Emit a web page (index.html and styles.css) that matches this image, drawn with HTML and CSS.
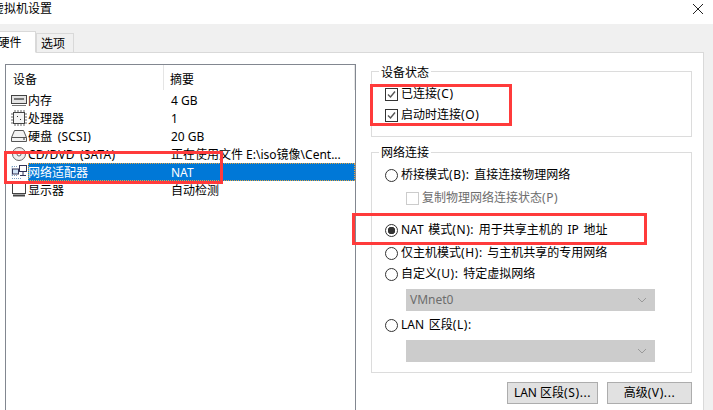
FILE: index.html
```html
<!DOCTYPE html>
<html lang="zh-CN">
<head>
  <meta charset="UTF-8" />
  <title>虚拟机设置</title>
  <link rel="stylesheet" href="styles.css">
</head>
<body>
  <div class="window">
    <div class="titlebar">
      <span class="title">虚拟机设置</span>
      <svg class="close" width="12" height="12" viewBox="0 0 12 12"><path d="M1 1l10 10M11 1L1 11" stroke="#222" fill="none"/></svg>
    </div>

    <div class="tabs">
      <div class="tab active">硬件</div>
      <div class="tab">选项</div>
    </div>

    <div class="panel">
      <div class="list">
        <div class="list-head">
          <span class="col-name">设备</span>
          <span class="col-sum">摘要</span>
        </div>
        <div class="row">
          <svg class="icon" viewBox="0 0 16 16"><rect x="0.5" y="3.5" width="15" height="8" fill="#e4e4e4" stroke="#444"/><path d="M3 6h10v2H3z" fill="#777"/><path d="M1 13.5h14" stroke="#777"/></svg>
          <div class="cells"><span class="col-name">内存</span><span class="col-sum">4 GB</span></div>
        </div>
        <div class="row">
          <svg class="icon" viewBox="0 0 16 16"><rect x="2.5" y="2.5" width="11" height="11" fill="#f4f4f4" stroke="#444"/><path d="M4 0v2M7 0v2M10 0v2M13 0v2M4 14v2M7 14v2M10 14v2M13 14v2M0 4h2M0 7h2M0 10h2M0 13h2M14 4h2M14 7h2M14 10h2M14 13h2" stroke="#666"/><path d="M6 6h1v1H6zM9 9h1v1H9z" fill="#333"/></svg>
          <div class="cells"><span class="col-name">处理器</span><span class="col-sum">1</span></div>
        </div>
        <div class="row">
          <svg class="icon" viewBox="0 0 16 16"><path d="M3.5 2.5h9l3 7v4h-15v-4z" fill="#f2f2f2" stroke="#555"/><path d="M0.5 9.5h15" stroke="#555"/><path d="M12 11h2" stroke="#333"/></svg>
          <div class="cells"><span class="col-name lat">硬盘 (SCSI)</span><span class="col-sum">20 GB</span></div>
        </div>
        <div class="row">
          <svg class="icon" viewBox="0 0 16 16"><circle cx="8" cy="8" r="6.5" fill="#eee" stroke="#666"/><circle cx="8" cy="8" r="2" fill="#fff" stroke="#666"/><path d="M4 5l2 1" stroke="#999"/></svg>
          <div class="cells"><span class="col-name lat">CD/DVD (SATA)</span><span class="col-sum">正在使用文件 E:\iso镜像\Cent...</span></div>
        </div>
        <div class="row">
          <svg class="icon" viewBox="0 0 16 16"><path d="M1 2.5h6M1 2.5v9M1 11.5h5" stroke="#7a9cc0" stroke-dasharray="1 1" fill="none"/><rect x="1.5" y="5" width="6" height="5" fill="#cfe2f5" stroke="#335"/><rect x="8.5" y="1.5" width="7" height="6" fill="#fff" stroke="#335"/><path d="M12 8v3M9 11.5h6" stroke="#335"/><path d="M1 14.5h9" stroke="#7a9cc0" stroke-dasharray="1 1"/></svg>
          <div class="cells selected"><span class="col-name">网络适配器</span><span class="col-sum">NAT</span></div>
        </div>
        <div class="row">
          <svg class="icon" viewBox="0 0 16 16"><rect x="1.5" y="1.5" width="13" height="10" fill="#fff" stroke="#444"/><path d="M2 13.5h12" stroke="#444" stroke-width="2"/></svg>
          <div class="cells"><span class="col-name">显示器</span><span class="col-sum">自动检测</span></div>
        </div>
      </div>

      <div class="side">
        <fieldset class="group state-group">
          <legend>设备状态</legend>
          <div class="opt first-check"><span class="check on"></span>已连接<span class="key">(C)</span></div>
          <div class="opt second-check"><span class="check on"></span>启动时连接<span class="key">(O)</span></div>
        </fieldset>

        <fieldset class="group net-group">
          <legend>网络连接</legend>
          <div class="opt bridge"><span class="radio"></span><span>桥接模式<span class="key">(B):</span> 直接连接物理网络</span></div>
          <div class="opt sub disabled"><span class="check"></span>复制物理网络连接状态<span class="key">(P)</span></div>
          <div class="opt nat"><span class="radio on"></span><span>NAT 模式<span class="key">(N):</span> 用于共享主机的 IP 地址</span></div>
          <div class="opt host"><span class="radio"></span><span>仅主机模式<span class="key">(H):</span> 与主机共享的专用网络</span></div>
          <div class="opt custom"><span class="radio"></span><span>自定义<span class="key">(U):</span> 特定虚拟网络</span></div>
          <div class="combo vmnet">VMnet0<svg width="10" height="6" viewBox="0 0 10 6"><path d="M1 1l4 4 4-4" stroke="#999" fill="none"/></svg></div>
          <div class="opt lan"><span class="radio"></span><span>LAN 区段<span class="key">(L):</span></span></div>
          <div class="combo lan-combo"><svg width="10" height="6" viewBox="0 0 10 6"><path d="M1 1l4 4 4-4" stroke="#999" fill="none"/></svg></div>
        </fieldset>

        <div class="buttons">
          <div class="btn lan-btn">LAN 区段<span class="key">(S)...</span></div>
          <div class="btn adv-btn">高级<span class="key">(V)...</span></div>
        </div>
      </div>
    </div>
  </div>

  <!-- 红色标注框 -->
  <div class="mark mark-row"></div>
  <div class="mark mark-state"></div>
  <div class="mark mark-nat"></div>
</body>
</html>
```

FILE: styles.css
```css
html, body {
  margin: 0;
  padding: 0;
  width: 713px;
  height: 410px;
  overflow: hidden;
}
body {
  position: relative;
  background: #f0f0f0;
  color: #000;
  font-family: "Noto Sans", "Noto Sans CJK SC", sans-serif;
  font-size: 12px;
  line-height: 16px;
}
.window {
  display: flex;
  flex-direction: column;
  height: 410px;
}
.titlebar {
  display: flex;
  align-items: center;
  justify-content: space-between;
  flex: none;
  height: 24px;
  padding-bottom: 6px;
  padding-right: 9px;
  box-sizing: border-box;
  background: #fff;
}
.title {
  margin-left: -8px;
}
.tabs {
  display: flex;
  align-items: flex-end;
  flex: none;
  height: 29px;
  margin-bottom: -1px;
  position: relative;
  z-index: 1;
}
.tab {
  width: 38px;
  height: 20px;
  box-sizing: border-box;
  border: 1px solid #d9d9d9;
  padding-top: 2px;
  text-indent: -4px;
  text-align: center;
}
.tab.active {
  width: 37px;
  height: 22px;
  margin-left: -1px;
  background: #fff;
  border-bottom-color: #fff;
  padding-top: 3px;
  text-indent: -16px;
}
.panel {
  display: flex;
  flex: 1;
  width: 704px;
  box-sizing: border-box;
  background: #fff;
  border: 1px solid #d9d9d9;
  border-left: none;
  border-bottom: none;
  padding: 11px 0 0 5px;
  overflow: hidden;
}
.list {
  flex: none;
  width: 351px;
  height: 360px;
  box-sizing: border-box;
  border: 1px solid #828790;
}
.list-head {
  display: flex;
  align-items: flex-start;
  height: 25px;
  margin-bottom: 1px;
  padding-left: 7px;
  line-height: 29px;
  border-right: 1px solid #e5e5e5;
}
.list-head .col-name {
  width: 150px;
  height: 25px;
  border-right: 1px solid #e5e5e5;
  margin-right: 6px;
}
.row {
  display: flex;
  height: 18px;
  padding-left: 5px;
  white-space: nowrap;
}
.icon {
  flex: none;
  width: 16px;
  height: 16px;
  margin: 1px 1px 0 0;
}
.cells {
  display: flex;
  flex: 1;
  line-height: 20px;
}
.cells .col-name {
  flex: none;
  width: 143px;
}
.lat {
  letter-spacing: 0.2px;
  word-spacing: 2px;
}
.selected {
  background: #0078d7;
  color: #fff;
  outline: 1px dotted #e8a33d;
  outline-offset: -1px;
}
.side {
  flex: none;
  width: 321px;
  margin-left: 15px;
}
.group {
  margin: 0;
  padding: 0 0 0 13px;
  border: 1px solid #dcdcdc;
  box-sizing: border-box;
  width: 321px;
  min-width: 0;
}
.group legend {
  padding: 0 2px;
  margin-left: -6px;
}
.state-group {
  height: 76px;
  margin-top: -3px;
}
.state-group legend {
  padding-top: 4px;
}
.net-group {
  height: 230px;
  margin-top: 6px;
}
.net-group legend {
  padding-top: 2px;
}
.opt {
  display: flex;
  align-items: center;
  height: 16px;
  white-space: nowrap;
  word-spacing: 1.5px;
}
.key {
  letter-spacing: 0.6px;
}
.check,
.radio {
  flex: none;
  width: 13px;
  height: 13px;
  margin-right: 3px;
  box-sizing: border-box;
  border: 1px solid #333;
  background: #fff;
}
.check.on {
  background: #fff url("data:image/svg+xml,%3Csvg xmlns='http://www.w3.org/2000/svg' width='11' height='11'%3E%3Cpath d='M2 5.5l2.5 2.5L9 2.5' stroke='%23555' stroke-width='1.4' fill='none'/%3E%3C/svg%3E") center no-repeat;
}
.radio {
  border-radius: 50%;
}
.radio.on {
  background: radial-gradient(circle, #333 0 3.5px, #fff 4px);
}
.first-check { margin-top: 5px; }
.second-check { margin-top: 5px; }
.bridge { margin-top: 6px; }
.sub { margin: 7px 0 0 21px; }
.disabled { color: #6d6d6d; }
.disabled .check { border-color: #ccc; }
.nat { margin-top: 16px; }
.host { margin-top: 7px; }
.custom { margin-top: 5px; }
.lan { margin-top: 6px; }
.combo {
  display: flex;
  align-items: center;
  justify-content: space-between;
  width: 249px;
  height: 22px;
  margin-left: 21px;
  padding: 0 8px 0 4px;
  box-sizing: border-box;
  background: #cccccc;
  color: #6d6d6d;
}
.vmnet { margin-top: 7px; }
.lan-combo { margin-top: 7px; justify-content: flex-end; }
.buttons {
  display: flex;
  justify-content: flex-end;
  gap: 9px;
  margin-top: 9px;
}
.btn {
  height: 22px;
  box-sizing: border-box;
  border: 1px solid #adadad;
  background: #e1e1e1;
  text-align: center;
  line-height: 20px;
}
.lan-btn { width: 91px; }
.adv-btn { width: 85px; }
.mark {
  position: absolute;
  box-sizing: border-box;
  border: 3px solid #ff3b3b;
}
.mark-row { left: 4px; top: 151px; width: 219px; height: 33px; }
.mark-state { left: 370px; top: 84px; width: 142px; height: 42px; }
.mark-nat { left: 352px; top: 213px; width: 295px; height: 32px; }
.close { flex: none; }
```
